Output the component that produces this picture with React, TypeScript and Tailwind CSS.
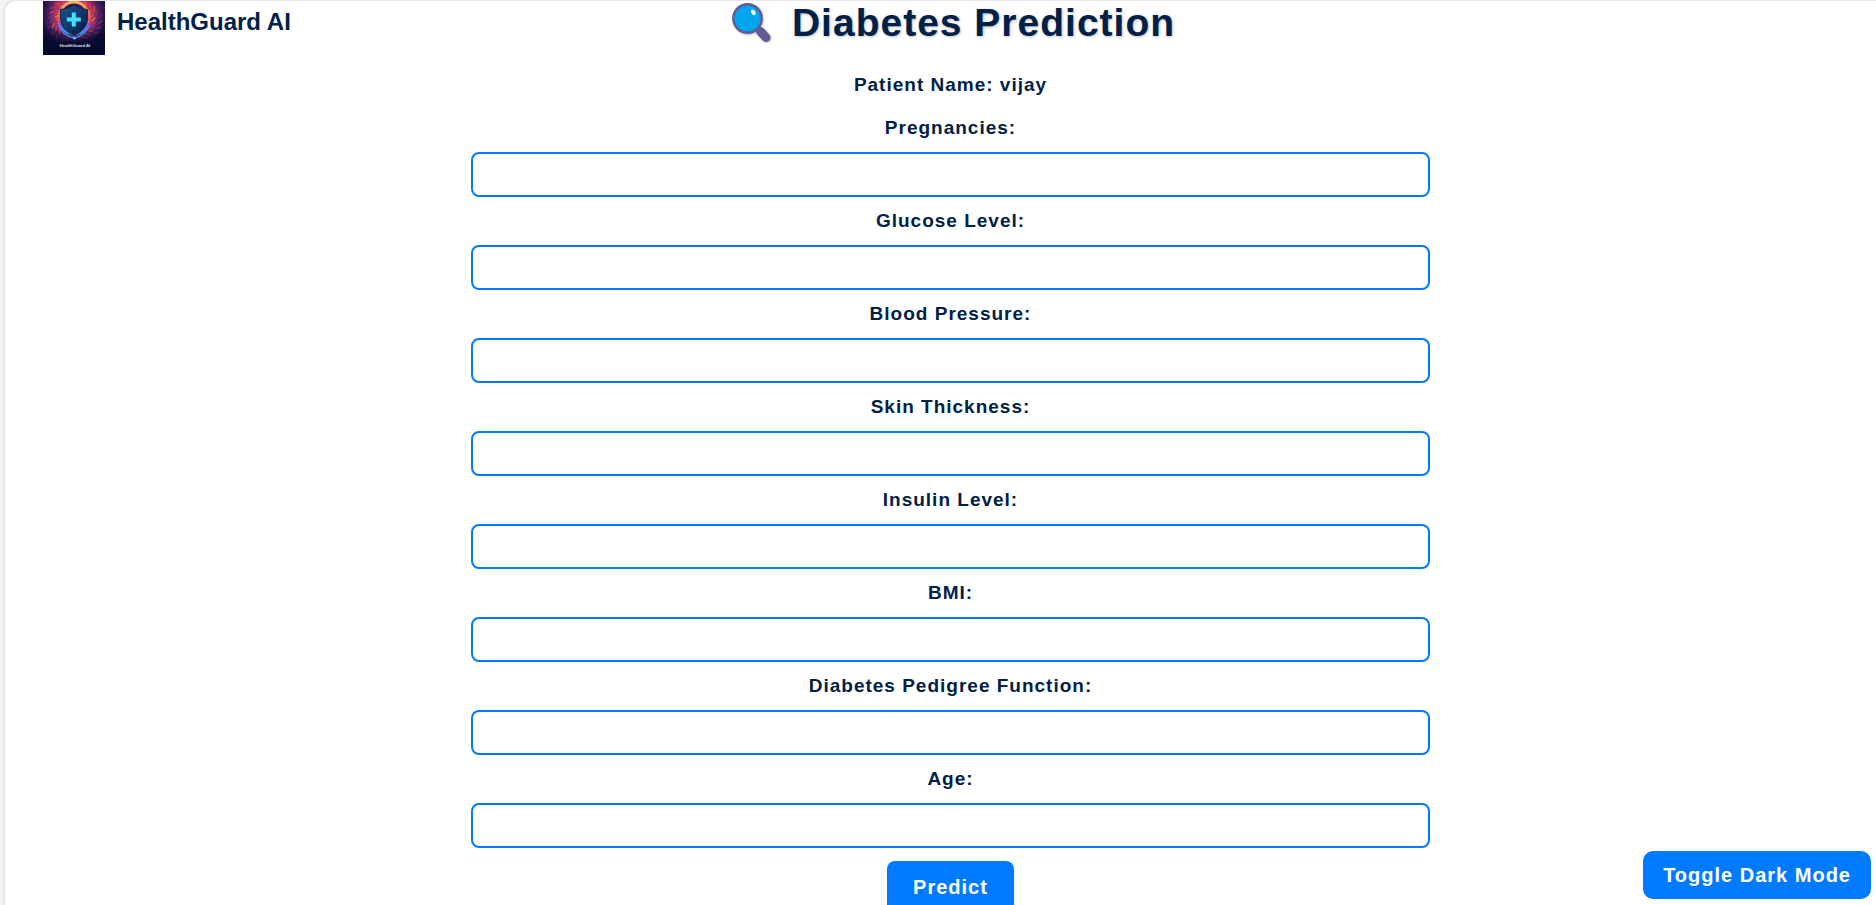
import { useState } from 'react'

const fields = [
  { id: 'pregnancies', label: 'Pregnancies:' },
  { id: 'glucose', label: 'Glucose Level:' },
  { id: 'pressure', label: 'Blood Pressure:' },
  { id: 'skin', label: 'Skin Thickness:' },
  { id: 'insulin', label: 'Insulin Level:' },
  { id: 'bmi', label: 'BMI:' },
  { id: 'pedigree', label: 'Diabetes Pedigree Function:' },
  { id: 'age', label: 'Age:' },
]

// Deterministic sparks scattered in rings around the shield.
const sparks = Array.from({ length: 210 }, (_, i) => {
  const angle = i * 2.39996
  const radius = 15 + (i % 14) * 0.95
  return {
    x: Math.round((30.5 + Math.cos(angle) * radius) * 10) / 10,
    y: Math.round((18 + Math.sin(angle) * radius * 0.85) * 10) / 10,
    color: ['#ff5148', '#b8356e', '#e8405a', '#6b3aa6', '#ff7a4d'][i % 5],
    opacity: 1 - (i % 14) / 22,
  }
})

function Logo() {
  return (
    <svg width="62" height="54" viewBox="0 0 62 54" aria-hidden="true">
      <defs>
        <radialGradient id="glow" cx="31" cy="14" r="34" gradientUnits="userSpaceOnUse">
          <stop offset="0" stopColor="#f0505a" />
          <stop offset="0.5" stopColor="#c4385a" />
          <stop offset="0.75" stopColor="#4a1f62" />
          <stop offset="1" stopColor="#120c3c" />
        </radialGradient>
        <linearGradient id="fade" x1="0" y1="0" x2="0" y2="1">
          <stop offset="0.5" stopColor="#050a30" stopOpacity="0" />
          <stop offset="0.82" stopColor="#050a30" />
        </linearGradient>
        <linearGradient id="ring" x1="0" y1="0" x2="0" y2="1">
          <stop offset="0" stopColor="#ffb45e" />
          <stop offset="0.5" stopColor="#ff5a4d" />
          <stop offset="0.72" stopColor="#8a55f0" />
          <stop offset="1" stopColor="#2ba8f5" />
        </linearGradient>
        <linearGradient id="shield" x1="0" y1="0" x2="1" y2="1">
          <stop offset="0" stopColor="#1f5582" />
          <stop offset="0.5" stopColor="#0f3a70" />
          <stop offset="1" stopColor="#071238" />
        </linearGradient>
      </defs>
      <rect width="62" height="54" fill="#0b0a35" />
      <rect width="62" height="54" fill="url(#glow)" />
      {sparks.map((s, i) => (
        <rect key={i} x={s.x} y={s.y} width="1.4" height="1.4" fill={s.color} opacity={s.opacity} />
      ))}
      <rect width="62" height="54" fill="url(#fade)" />
      <ellipse cx="31" cy="17" rx="15" ry="16" fill="#3a1650" stroke="url(#ring)" strokeWidth="3" />
      <path d="M15.500 24Q20 35 31 37Q42 35 46.500 24" fill="none" stroke="#3d8cf0" strokeWidth="1.400" />
      <path
        d="M31 4Q37 8 44.500 8.500V18Q43.500 29 31 34.500Q18.500 29 17.500 18V8.500Q25 8 31 4Z"
        fill="url(#shield)"
        stroke="#123054"
        strokeWidth="1.200"
      />
      <path d="M28.800 11.500h4v5h5v4h-5v5h-4v-5h-5v-4h5z" fill="#3fe3ff" />
      <circle cx="31.500" cy="37" r="1.600" fill="#31c9ff" />
      <text x="32" y="46" textAnchor="middle" fontSize="4.200" fontWeight="700" fill="#dfe4f5" fontFamily="Liberation Sans, sans-serif">
        HealthGuard AI
      </text>
    </svg>
  )
}

function Magnifier() {
  return (
    <svg
      width="46"
      height="42"
      viewBox="-4 0 46 42"
      aria-hidden="true"
      className="drop-shadow-[1px_1px_1px_rgba(0,0,0,0.25)]"
    >
      <path d="M30.500 29.500L36 35.500" stroke="#635994" strokeWidth="9" strokeLinecap="round" />
      <path d="M25 24L30 29" stroke="#635994" strokeWidth="3" />
      <circle cx="17.500" cy="16.500" r="14.200" fill="#00a6ed" stroke="#635994" strokeWidth="2.400" />
      <ellipse cx="23.300" cy="10.300" rx="2" ry="3" transform="rotate(-30 23.300 10.300)" fill="#fff" />
    </svg>
  )
}

export default function App() {
  const [dark, setDark] = useState(false)

  return (
    <div
      className={`min-h-screen overflow-x-clip pl-[5px] font-['Liberation_Sans',Arial,sans-serif] font-bold ${
        dark ? 'bg-[#121212] text-white' : 'bg-[#f4f4f4] text-[#002147]'
      }`}
    >
      <main
        className={`relative -mr-5 flex min-h-screen flex-col items-center rounded-tl-xl border-t pb-8 shadow-[0_0_4px_rgba(0,0,0,0.15)] ${
          dark ? 'border-[#333] bg-[#1e1e1e]' : 'border-[#e8e8e8] bg-white'
        }`}
      >
        <div className="absolute top-0 left-[38px] flex items-start gap-3">
          <Logo />
          <span className="pt-[5px] text-2xl leading-8">HealthGuard AI</span>
        </div>

        <h1 className="flex items-center gap-5 text-[39px] leading-[43px] tracking-[1px] [text-shadow:1px_1px_3px_rgba(0,0,0,0.25)]">
          <Magnifier />
          Diabetes Prediction
        </h1>
        <p className="mt-[27px] text-[19px] leading-7 tracking-[1px]">Patient Name: vijay</p>

        <form
          className="mt-[5px] flex w-[959px] max-w-full flex-col items-center"
          onSubmit={(e) => e.preventDefault()}
        >
          {fields.map((f) => (
            <div key={f.id} className="flex w-full flex-col items-center gap-[10px] pt-[10px]">
              <label htmlFor={f.id} className="text-[19px] leading-7 tracking-[1px]">
                {f.label}
              </label>
              <input
                id={f.id}
                type="text"
                className="h-[45px] w-full rounded-lg border-2 border-[#007bff] bg-transparent px-3 text-base"
              />
            </div>
          ))}
          <button
            type="submit"
            className="mt-[13px] h-13 rounded-lg bg-[#007bff] px-[26px] text-xl tracking-[1px] text-white"
          >
            Predict
          </button>
        </form>
      </main>

      <button
        type="button"
        onClick={() => setDark(!dark)}
        className="fixed right-[5px] bottom-[6px] h-12 rounded-[10px] bg-[#007bff] px-5 text-xl tracking-[1px] text-white"
      >
        Toggle Dark Mode
      </button>
    </div>
  )
}
